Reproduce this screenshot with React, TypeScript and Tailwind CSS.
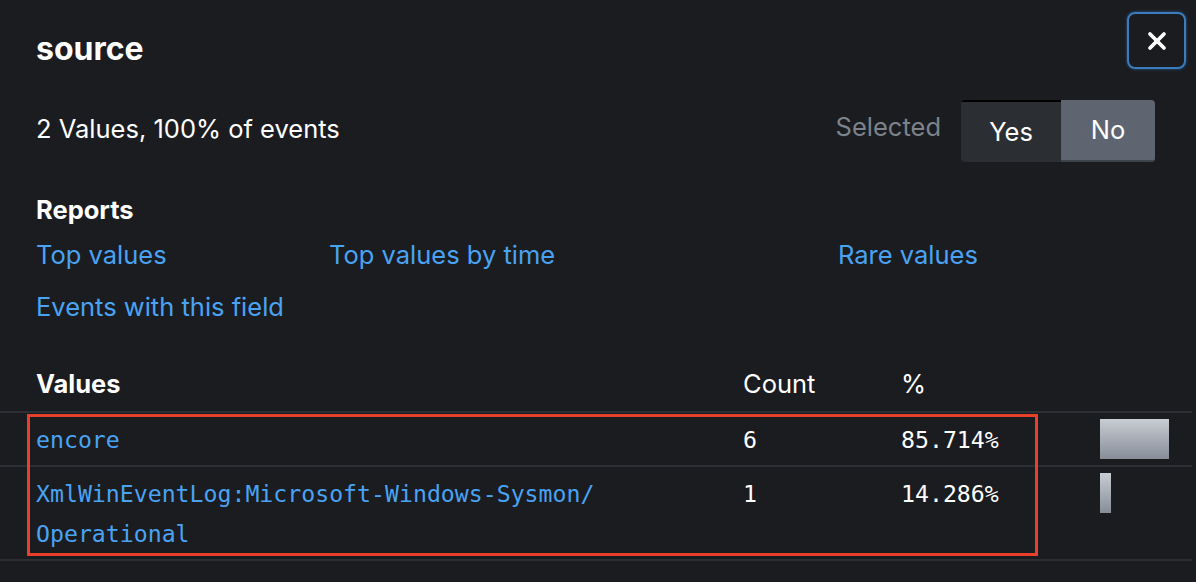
import { X } from "lucide-react";

type Row = {
  value: string[];
  count: number;
  pct: string;
  bar: number;
};

const rows: Row[] = [
  { value: ["encore"], count: 6, pct: "85.714%", bar: 69 },
  {
    value: ["XmlWinEventLog:Microsoft-Windows-Sysmon/", "Operational"],
    count: 1,
    pct: "14.286%",
    bar: 11,
  },
];

const sans = "font-['Inter','Liberation_Sans',sans-serif]";
const mono = "font-['DejaVu_Sans_Mono','Liberation_Mono',monospace]";

const App = () => {
  return (
    <div className={`min-h-screen w-full bg-[#1a1c20] text-white ${sans}`}>
      <div className="flex items-start justify-between pl-9 pr-[10px] pt-3">
        <h1 className="mt-[19px] text-[32px] font-bold leading-[36px]">source</h1>
        <button className="flex h-[57px] w-[59px] items-center justify-center rounded-[8px] border-2 border-[#3b7cbf] shadow-[0_0_3px_#2b5f94]">
          <X size={28} strokeWidth={3.2} className="text-white" />
        </button>
      </div>

      <div className="mt-[31px] flex items-center justify-between pl-9 pr-[41px]">
        <p className="-mt-1 text-[25.5px] leading-[30px]">2 Values, 100% of events</p>
        <div className="flex items-center">
          <span className="-mt-2 mr-5 text-[25.5px] text-[#7c838c]">Selected</span>
          <div className="flex h-[62px] overflow-hidden rounded-[4px]">
            <div className="flex w-[100px] items-center justify-center border-t-2 border-black bg-[#2b2e32] text-[25.5px]">
              Yes
            </div>
            <div className="flex w-[94px] items-center justify-center border-b-2 border-[#3d434b] bg-[#5e6570] text-[25.5px]">
              No
            </div>
          </div>
        </div>
      </div>

      <div className="px-9">
        <h2 className="mt-[33px] text-[25.5px] font-bold leading-[30px]">Reports</h2>
        <div className="mt-[15px] grid grid-cols-[293px_509px_1fr] gap-y-[22px] text-[25.5px] leading-[30px] text-[#4aa3f2]">
          <a>Top values</a>
          <a>Top values by time</a>
          <a>Rare values</a>
          <a>Events with this field</a>
        </div>
      </div>

      <div className="mt-[47px] w-[1192px]">
        <div className="grid grid-cols-[743px_158px_199px_1fr] border-b-2 border-[#2c2f34] pb-3 text-[25.5px] leading-[30px]">
          <div className="pl-9 font-bold">Values</div>
          <div>Count</div>
          <div>%</div>
          <div />
        </div>
        <div className="relative">
          {rows.map((r) => (
            <div
              key={r.pct}
              className={`grid grid-cols-[743px_158px_199px_1fr] border-b-2 border-[#2c2f34] ${mono} text-[23.2px] leading-[40px]`}
            >
              <div className="pb-[5px] pl-9 pt-[7px] text-[#4aa3f2]">
                {r.value.map((v) => (
                  <div key={v}>{v}</div>
                ))}
              </div>
              <div className="pt-[7px]">{r.count}</div>
              <div className="pt-[7px]">{r.pct}</div>
              <div className="pt-[6px]">
                <div
                  className="h-10 bg-gradient-to-b from-[#c9cdd4] to-[#878e98]"
                  style={{ width: r.bar }}
                />
              </div>
            </div>
          ))}
          <div className="pointer-events-none absolute left-[27px] top-px h-[142px] w-[1011px] border-[3px] border-[#e8402a]" />
        </div>
      </div>
    </div>
  );
};

export default App;
